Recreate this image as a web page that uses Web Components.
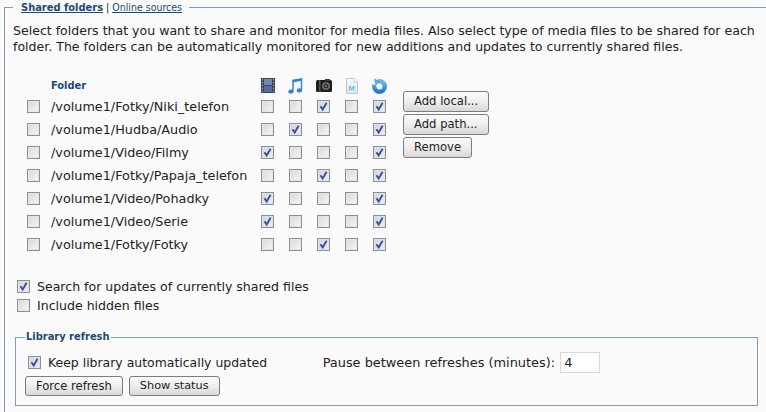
<!DOCTYPE html>
<html>
<head>
<meta charset="utf-8">
<style>
html, body { margin: 0; padding: 0; background: #fafafa; }
body { width: 766px; height: 412px; overflow: hidden; font: 13px "DejaVu Sans", Verdana, sans-serif; color: #222; }
</style>
</head>
<body>
<share-panel>
  <span slot="intro">Select folders that you want to share and monitor for media files. Also select type of media files to be shared for each folder. The folders can be automatically monitored for new additions and updates to currently shared files.</span>
</share-panel>

<script>
class CheckBox extends HTMLElement{
    constructor(){
        super();
        this.shadow = this.attachShadow({mode: 'open'});
    }
    connectedCallback(){
        let mark = this.hasAttribute('checked') ? '<svg viewBox="0 0 13 13" width="13" height="13"><path d="M3.4 6.200 L5.700 9.400 L9.600 2.800" fill="none" stroke="#3d4f8f" stroke-width="1.900"/></svg>' : '';
        this.shadow.innerHTML = `
        <style>
            :host{ display: block; flex: none; width: 13px; height: 13px; box-sizing: border-box; border: 1px solid #8f8f8f; background: linear-gradient(135deg, #d8d8d8, #f6f6f6); box-shadow: inset 0 0 0 1px #e6e6e6; position: relative; }
            :host([checked]){ background: linear-gradient(135deg, #ccd2e2, #eef0f6); box-shadow: inset 0 0 0 1px #dfe3ee; }
            svg{ position: absolute; left: -1px; top: -1px; }
        </style>${mark}`;
    }
}
customElements.define('check-box', CheckBox);

class PushButton extends HTMLElement{
    constructor(){
        super();
        this.attachShadow({mode: 'open'}).innerHTML = `
        <style>
            :host{ display: inline-block; box-sizing: border-box; height: 21px; line-height: 19px; padding: 0 10px; font-size: 11.600px; white-space: nowrap; color: #222; border: 1px solid #7d7d7d; border-radius: 3px; background: linear-gradient(#fafafa, #f0f0f0 45%, #d8d8d8); }
            :host([small]){ height: 20px; line-height: 18px; }
        </style><slot></slot>`;
    }
}
customElements.define('push-button', PushButton);

class CheckLine extends HTMLElement{
    constructor(){
        super();
        this.shadow = this.attachShadow({mode: 'open'});
    }
    connectedCallback(){
        let on = this.hasAttribute('checked') ? 'checked' : '';
        this.shadow.innerHTML = `
        <style>
            :host{ display: flex; align-items: center; gap: 7px; height: 19px; font-size: 12.550px; }
        </style>
        <check-box ${on}></check-box><span><slot></slot></span>`;
    }
}
customElements.define('check-line', CheckLine);

const icons = [
    // film strip
    `<svg width="14" height="15" viewBox="0 0 14 15"><rect width="14" height="15" fill="#3b4452"/><rect x="3" y="1" width="8" height="6" fill="#6d8cb4"/><rect x="3" y="8" width="8" height="6" fill="#4f6f9e"/><path d="M1 1.500h1M1 4.500h1M1 7.500h1M1 10.500h1M1 13.500h1M12 1.500h1M12 4.500h1M12 7.500h1M12 10.500h1M12 13.500h1" stroke="#a3aebb" stroke-width="1.300"/></svg>`,
    // note
    `<svg width="15" height="16" viewBox="0 0 15 16"><path d="M5 13V2.500L13.500 1v10.500" fill="none" stroke="#2a86dc" stroke-width="1.500"/><path d="M5 2.500L13.500 1v1.800L5 4.500z" fill="#2a86dc"/><ellipse cx="3" cy="13.600" rx="2.700" ry="2.100" fill="#2a86dc"/><ellipse cx="11.500" cy="12.400" rx="2.700" ry="2.100" fill="#2a86dc"/></svg>`,
    // camera
    `<svg width="16" height="13" viewBox="0 0 16 13"><rect y="1" width="16" height="12" rx="1.500" fill="#1e1e1e"/><rect x="9" y="0" width="5" height="2" fill="#3a3a3a"/><rect x="3" y="1" width="1.500" height="12" fill="#555"/><circle cx="10" cy="7" r="3.800" fill="#808080"/><circle cx="10" cy="7" r="2.500" fill="#2c3038"/><circle cx="10" cy="7" r="1.100" fill="#6b7a90"/></svg>`,
    // document
    `<svg width="12" height="16" viewBox="0 0 12 16"><defs><linearGradient id="d" x1="0" y1="0" x2="0" y2="1"><stop offset="0" stop-color="#f6fafc"/><stop offset="1" stop-color="#d8ebf6"/></linearGradient></defs><path d="M.5.5h7.500l3.500 3.500v11.500H.5z" fill="url(#d)" stroke="#b5cad8"/><path d="M8 .5V4h3.500" fill="#fff" stroke="#b5cad8"/><text x="2.400" y="12.500" font-size="7" font-family="DejaVu Sans" fill="#4f97d2">M</text></svg>`,
    // refresh
    `<svg width="15" height="16" viewBox="0 0 15 16"><defs><linearGradient id="r" x1="0" y1="0" x2="0" y2="1"><stop offset="0" stop-color="#6db4ea"/><stop offset="1" stop-color="#2a7cc8"/></linearGradient></defs><circle cx="7.500" cy="8.500" r="5.250" fill="#eef6fc" stroke="url(#r)" stroke-width="4.500"/><path d="M7.500 8.500L5.500 0H0V6z" fill="#fafafa"/><path d="M2 .5L9 3.200 3.500 7.500z" fill="#5aa9e6"/></svg>`
];

class FolderRow extends HTMLElement{
    constructor(){
        super();
        this.shadow = this.attachShadow({mode: 'open'});
    }
    connectedCallback(){
        let boxes = '';
        for(let f of this.getAttribute('flags')){
            boxes += `<check-box ${f == '1' ? 'checked' : ''}></check-box>`;
        }
        this.shadow.innerHTML = `
        <style>
            :host{ display: grid; grid-template-columns: 24px 210px auto; height: 23px; align-items: center; font-size: 12.800px; }
            .flags{ display: flex; gap: 15px; }
        </style>
        <check-box></check-box><span>${this.getAttribute('path')}</span>
        <div class="flags">${boxes}</div>`;
    }
}
customElements.define('folder-row', FolderRow);

class FolderTable extends HTMLElement{
    constructor(){
        super();
        this.shadow = this.attachShadow({mode: 'open'});
    }
    connectedCallback(){
        const rows = [
            ['/volume1/Fotky/Niki_telefon', '00101'],
            ['/volume1/Hudba/Audio', '01001'],
            ['/volume1/Video/Filmy', '10001'],
            ['/volume1/Fotky/Papaja_telefon', '00101'],
            ['/volume1/Video/Pohadky', '10001'],
            ['/volume1/Video/Serie', '10001'],
            ['/volume1/Fotky/Fotky', '00101']
        ];
        this.shadow.innerHTML = `
        <style>
            :host{ display: flex; gap: 17px; margin-left: 14px; }
            .head{ display: grid; grid-template-columns: 24px 210px auto; height: 19px; align-items: center; }
            .head b{ grid-column: 2; font: bold 11px "DejaVu Sans Condensed", "DejaVu Sans", sans-serif; color: #1c4a72; }
            .icons{ display: grid; grid-template-columns: repeat(5, 13px); column-gap: 15px; justify-items: center; align-items: center; }
            .icons > *{ display: block; }
            .side{ display: flex; flex-direction: column; align-items: flex-start; gap: 2px; padding-top: 15px; }
        </style>
        <div>
            <div class="head"><b>Folder</b><div class="icons">${icons.join('')}</div></div>
            ${rows.map(r => `<folder-row path="${r[0]}" flags="${r[1]}"></folder-row>`).join('')}
        </div>
        <div class="side">
            <push-button>Add local...</push-button>
            <push-button>Add path...</push-button>
            <push-button>Remove</push-button>
        </div>`;
    }
}
customElements.define('folder-table', FolderTable);

class SharePanel extends HTMLElement{
    constructor(){
        super();
        this.attachShadow({mode: 'open'}).innerHTML = `
        <style>
            :host{ display: block; }
            fieldset{ margin: 0; border: 1px solid #7e9db9; }
            .outer{ margin: 0 0 0 4px; padding: 8px 0 0 8px; border-right: 0; height: 420px; }
            legend{ padding: 0 7px 0 8px; font: 10.500px/14px "DejaVu Sans Condensed", "DejaVu Sans", sans-serif; }
            legend b{ font-size: 11px; color: #1c4a72; text-decoration: underline; }
            legend a{ color: #1c4a72; text-decoration: underline; }
            p{ margin: 0 0 21px; line-height: 16px; width: 750px; font-size: 12.550px; }
            .inner{ width: 743px; box-sizing: border-box; margin: 15px 0 0 2px; padding: 8px 0 9px 9px; }
            .inner legend{ padding: 0 1px; font-size: 11px; font-weight: bold; color: #1c4a72; }
            .opts{ margin: 21px 0 0 4px; }
            .line{ display: flex; align-items: center; height: 21px; margin-left: 3px; font-size: 12.450px; }
            .line check-line{ font-size: 12.450px; }
            .pause{ margin-left: 55.500px; display: flex; align-items: center; gap: 5px; font-size: 12.900px; }
            .field{ box-sizing: border-box; width: 40px; height: 21px; border: 1px solid #d8d8d8; background: #fff; padding-left: 3px; line-height: 19px; }
            .btns{ display: flex; gap: 6px; margin-top: 3px; }
            .narrow{ font-size: 11.300px; }
        </style>
        <fieldset class="outer">
            <legend><b>Shared folders</b> | <a>Online sources</a></legend>
            <p><slot name="intro"></slot></p>
            <folder-table></folder-table>
            <div class="opts">
                <check-line checked>Search for updates of currently shared files</check-line>
                <check-line>Include hidden files</check-line>
            </div>
            <fieldset class="inner">
                <legend>Library refresh</legend>
                <div class="line">
                    <check-line checked>Keep library automatically updated</check-line>
                    <div class="pause">Pause between refreshes (minutes): <div class="field">4</div></div>
                </div>
                <div class="btns"><push-button small>Force refresh</push-button><push-button small class="narrow">Show status</push-button></div>
            </fieldset>
        </fieldset>`;
    }
}
customElements.define('share-panel', SharePanel);
</script>
</body>
</html>
